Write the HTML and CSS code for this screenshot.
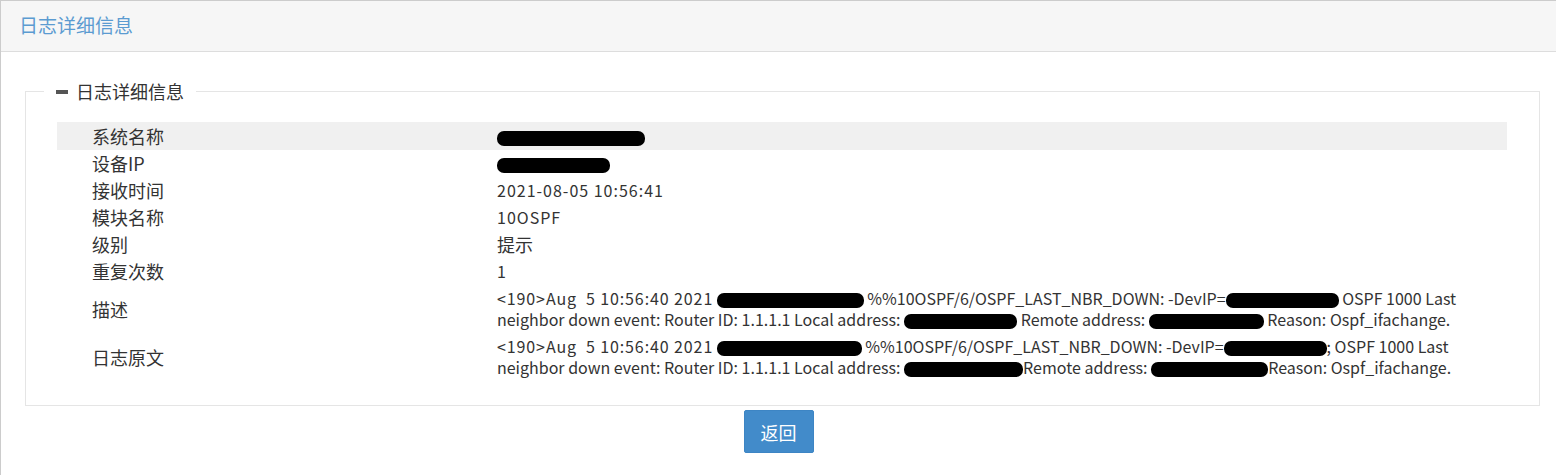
FILE: index.html
```html
<!DOCTYPE html>
<html lang="zh">
<head>
<meta charset="utf-8">
<title>日志详细信息</title>
<link rel="stylesheet" href="styles.css">
</head>
<body>
<div class="panel">
  <div class="panel-head">日志详细信息</div>
  <div class="panel-body">
    <fieldset class="group">
      <legend class="group-title"><span class="collapse-icon"></span>日志详细信息</legend>
      <table class="detail">
        <tbody>
          <tr class="hl"><td class="label">系统名称</td><td class="value"><span class="redact" style="width:148px"></span></td></tr>
          <tr><td class="label">设备IP</td><td class="value"><span class="redact" style="width:113px"></span></td></tr>
          <tr><td class="label">接收时间</td><td class="value"><span class="num">2021-08-05 10:56:41</span></td></tr>
          <tr><td class="label">模块名称</td><td class="value"><span class="num">10OSPF</span></td></tr>
          <tr><td class="label">级别</td><td class="value cjk">提示</td></tr>
          <tr><td class="label">重复次数</td><td class="value"><span class="num">1</span></td></tr>
          <tr><td class="label">描述</td><td class="value"><span class="stamp">&lt;190&gt;Aug&nbsp; 5 10:56:40 2021</span> <span class="redact" style="width:147px"></span> %%10OSPF/6/OSPF_LAST_NBR_DOWN: -DevIP=<span class="redact" style="width:113px"></span> OSPF 1000 Last neighbor down event: Router ID: 1.1.1.1 Local address: <span class="redact" style="width:113px"></span> Remote address: <span class="redact" style="width:115px"></span> Reason: Ospf_ifachange.</td></tr>
          <tr><td class="label">日志原文</td><td class="value"><span class="stamp">&lt;190&gt;Aug&nbsp; 5 10:56:40 2021</span> <span class="redact" style="width:145px"></span> %%10OSPF/6/OSPF_LAST_NBR_DOWN: -DevIP=<span class="redact" style="width:103px"></span>; OSPF 1000 Last neighbor down event: Router ID: 1.1.1.1 Local address: <span class="redact" style="width:119px"></span>Remote address: <span class="redact" style="width:117px"></span>Reason: Ospf_ifachange.</td></tr>
        </tbody>
      </table>
    </fieldset>
    <div class="actions"><button class="btn-back" type="button">返回</button></div>
  </div>
</div>
</body>
</html>
```
FILE: styles.css
```css
html, body {
  margin: 0;
  padding: 0;
  background: #fff;
}
body {
  font-family: "Noto Sans CJK SC", "Noto Sans", sans-serif;
  color: #333;
}
.panel {
  border-top: 1px solid #cccccc;
  border-left: 1px solid #cccccc;
  min-height: 475px;
  box-sizing: border-box;
}
.panel-head {
  height: 50px;
  line-height: 48px;
  background: #f6f6f6;
  border-bottom: 1px solid #dddddd;
  padding-left: 18px;
  font-size: 19px;
  color: #5b9bd1;
}
.panel-body {
  padding: 27px 16px 0 24px;
}
.group {
  margin: 0;
  padding: 0 0 24px 18px;
  border: 1px solid #e5e5e5;
  min-width: 0;
}
.group-title {
  padding: 0 12px;
  font-size: 18px;
  line-height: 24px;
  color: #333;
}
.collapse-icon {
  display: inline-block;
  width: 12px;
  height: 4px;
  background: #555;
  vertical-align: middle;
  margin-right: 8px;
  position: relative;
  top: -2px;
}
.detail {
  width: 1450px;
  margin: 19px 0 0 13px;
  border-collapse: collapse;
}
.detail td {
  padding-top: 3px;
  padding-bottom: 3px;
  line-height: 21px;
  vertical-align: middle;
}
.detail tr.hl td {
  background: #f0f0f0;
  padding-top: 4px;
}
.detail td.label {
  width: 405px;
  padding-left: 35px;
  padding-right: 0;
  font-size: 18px;
}
.detail td.value {
  padding-left: 0;
  padding-right: 0;
  font-size: 16px;
}
.detail td.value.cjk {
  font-size: 18px;
}
.num {
  letter-spacing: 1px;
}
.stamp {
  letter-spacing: 0.9px;
}
.redact {
  display: inline-block;
  height: 15px;
  background: #000;
  border-radius: 7px;
  vertical-align: -3px;
}
.actions {
  display: flex;
  justify-content: center;
  padding-top: 4px;
  margin: 0 -16px 0 -24px;
}
.btn-back {
  width: 70px;
  height: 43px;
  background: #428bca;
  border: 1px solid #3d85c4;
  border-radius: 2px;
  color: #fff;
  font-family: "Noto Sans CJK SC", sans-serif;
  font-size: 18px;
  padding: 0;
  cursor: pointer;
}
```
